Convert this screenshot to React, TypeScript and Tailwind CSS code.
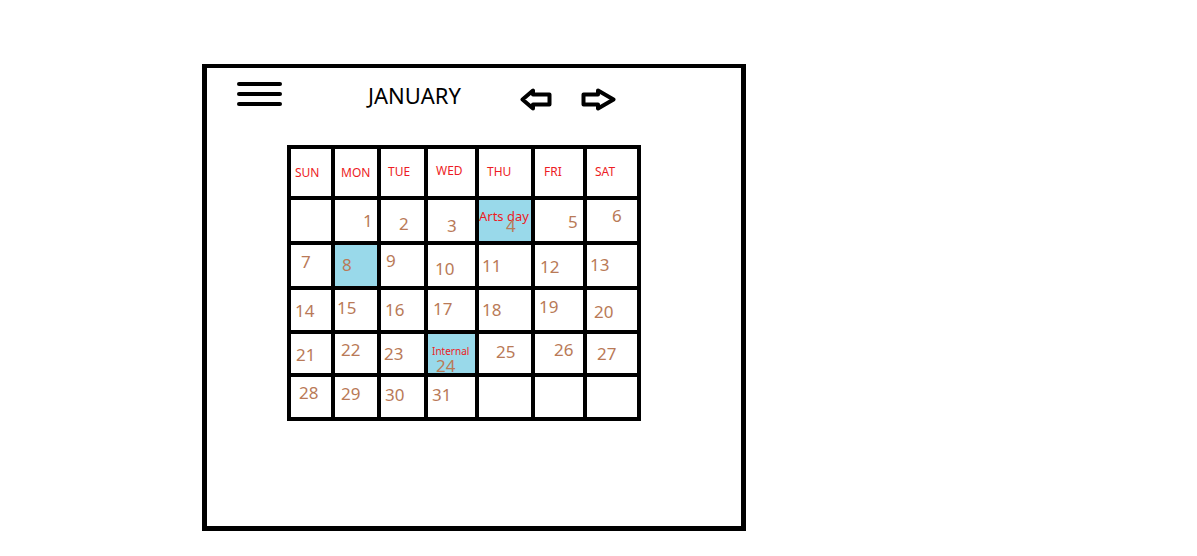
import React from "react";

type Cell = {
  n?: string;
  pad: string;
  blue?: boolean;
  note?: string;
  noteCls?: string;
  numCls?: string;
};

const heads = [
  { t: "SUN", pad: "pl-[4px] pt-[18px]" },
  { t: "MON", pad: "pl-[6px] pt-[18px]" },
  { t: "TUE", pad: "pl-[7px] pt-[17px]" },
  { t: "WED", pad: "pl-[8px] pt-[16px]" },
  { t: "THU", pad: "pl-[8px] pt-[17px]" },
  { t: "FRI", pad: "pl-[9px] pt-[17px]" },
  { t: "SAT", pad: "pl-[8px] pt-[17px]" },
];

const weeks: Cell[][] = [
  [
    { pad: "" },
    { n: "1", pad: "pl-[28px] pt-[13px]" },
    { n: "2", pad: "pl-[18px] pt-[16px]" },
    { n: "3", pad: "pl-[19px] pt-[18px]" },
    {
      n: "4",
      blue: true,
      note: "Arts day",
      pad: "pl-0 pt-[10px]",
      noteCls: "text-[13px] leading-[13px]",
      numCls: "ml-[27px] -mt-[5px]",
    },
    { n: "5", pad: "pl-[33px] pt-[14px]" },
    { n: "6", pad: "pl-[25px] pt-[8px]" },
  ],
  [
    { n: "7", pad: "pl-[10px] pt-[9px]" },
    { n: "8", blue: true, pad: "pl-[7px] pt-[12px]" },
    { n: "9", pad: "pl-[5px] pt-[8px]" },
    { n: "10", pad: "pl-[7px] pt-[16px]" },
    { n: "11", pad: "pl-[3px] pt-[13px]" },
    { n: "12", pad: "pl-[5px] pt-[14px]" },
    { n: "13", pad: "pl-[3px] pt-[12px]" },
  ],
  [
    { n: "14", pad: "pl-[4px] pt-[13px]" },
    { n: "15", pad: "pl-[2px] pt-[10px]" },
    { n: "16", pad: "pl-[4px] pt-[12px]" },
    { n: "17", pad: "pl-[5px] pt-[11px]" },
    { n: "18", pad: "pl-[3px] pt-[12px]" },
    { n: "19", pad: "pl-[4px] pt-[9px]" },
    { n: "20", pad: "pl-[7px] pt-[14px]" },
  ],
  [
    { n: "21", pad: "pl-[5px] pt-[13px]" },
    { n: "22", pad: "pl-[6px] pt-[8px]" },
    { n: "23", pad: "pl-[3px] pt-[12px]" },
    {
      n: "24",
      blue: true,
      note: "Internal",
      pad: "pl-[4px] pt-[12px]",
      noteCls: "text-[10px] leading-[10px]",
      numCls: "ml-[4px] mt-[2px]",
    },
    { n: "25", pad: "pl-[17px] pt-[10px]" },
    { n: "26", pad: "pl-[19px] pt-[8px]" },
    { n: "27", pad: "pl-[10px] pt-[12px]" },
  ],
  [
    { n: "28", pad: "pl-[8px] pt-[8px]" },
    { n: "29", pad: "pl-[6px] pt-[9px]" },
    { n: "30", pad: "pl-[4px] pt-[10px]" },
    { n: "31", pad: "pl-[4px] pt-[10px]" },
    { pad: "" },
    { pad: "" },
    { pad: "" },
  ],
];

function LeftArrow() {
  return (
    <svg width="32" height="23" viewBox="0 0 32 23" className="block">
      <polygon
        points="2.5,11.5 13,2.5 13,6.5 29.5,6.5 29.5,16.5 13,16.5 13,20.5"
        fill="white"
        stroke="black"
        strokeWidth="4"
        strokeLinejoin="round"
      />
    </svg>
  );
}

function RightArrow() {
  return (
    <svg width="35" height="23" viewBox="0 0 35 23" className="block">
      <polygon
        points="2.5,6.5 17,6.5 17,2.5 32.5,11.5 17,20.5 17,16.5 2.5,16.5"
        fill="white"
        stroke="black"
        strokeWidth="4"
        strokeLinejoin="round"
      />
    </svg>
  );
}

export default function App() {
  return (
    <div className="w-[1197px] h-[556px] bg-white pl-[202px] pt-[64px] font-['Noto_Sans',sans-serif]">
      <div className="w-[544px] h-[467px] border-[5px] border-t-4 border-black flex flex-col">
        {/* header */}
        <div className="h-[77px] shrink-0 flex items-start">
          <div className="ml-[30px] mt-[14px] flex flex-col gap-[6px]">
            <div className="w-[45px] h-[4px] rounded-full bg-black" />
            <div className="w-[45px] h-[4px] rounded-full bg-black" />
            <div className="w-[45px] h-[4px] rounded-full bg-black" />
          </div>
          <div className="ml-[86px] mt-[16px] w-[152px] text-[22px] leading-[22px] text-black">
            JANUARY
          </div>
          <div className="mt-[20px]">
            <LeftArrow />
          </div>
          <div className="mt-[20px] ml-[29px]">
            <RightArrow />
          </div>
        </div>

        {/* calendar grid */}
        <div className="ml-[80px] w-fit grid grid-cols-[40px_42px_43px_47px_52px_48px_50px] grid-rows-[47px_41px_41px_40px_39px_40px] gap-[4px] p-[4px] bg-black">
          {heads.map((h) => (
            <div key={h.t} className={`bg-white ${h.pad}`}>
              <div className="text-[12px] leading-[12px] text-[#ed1c24]">{h.t}</div>
            </div>
          ))}
          {weeks.map((w, wi) =>
            w.map((c, ci) => (
              <div
                key={`${wi}-${ci}`}
                className={`${c.blue ? "bg-[#99d9ea]" : "bg-white"} ${c.pad} flex flex-col items-start`}
              >
                {c.note && (
                  <div className={`whitespace-nowrap text-[#ed1c24] ${c.noteCls ?? ""}`}>{c.note}</div>
                )}
                {c.n && (
                  <div className={`text-[17px] leading-[16px] text-[#b97a57] ${c.numCls ?? ""}`}>{c.n}</div>
                )}
              </div>
            ))
          )}
        </div>
      </div>
    </div>
  );
}
